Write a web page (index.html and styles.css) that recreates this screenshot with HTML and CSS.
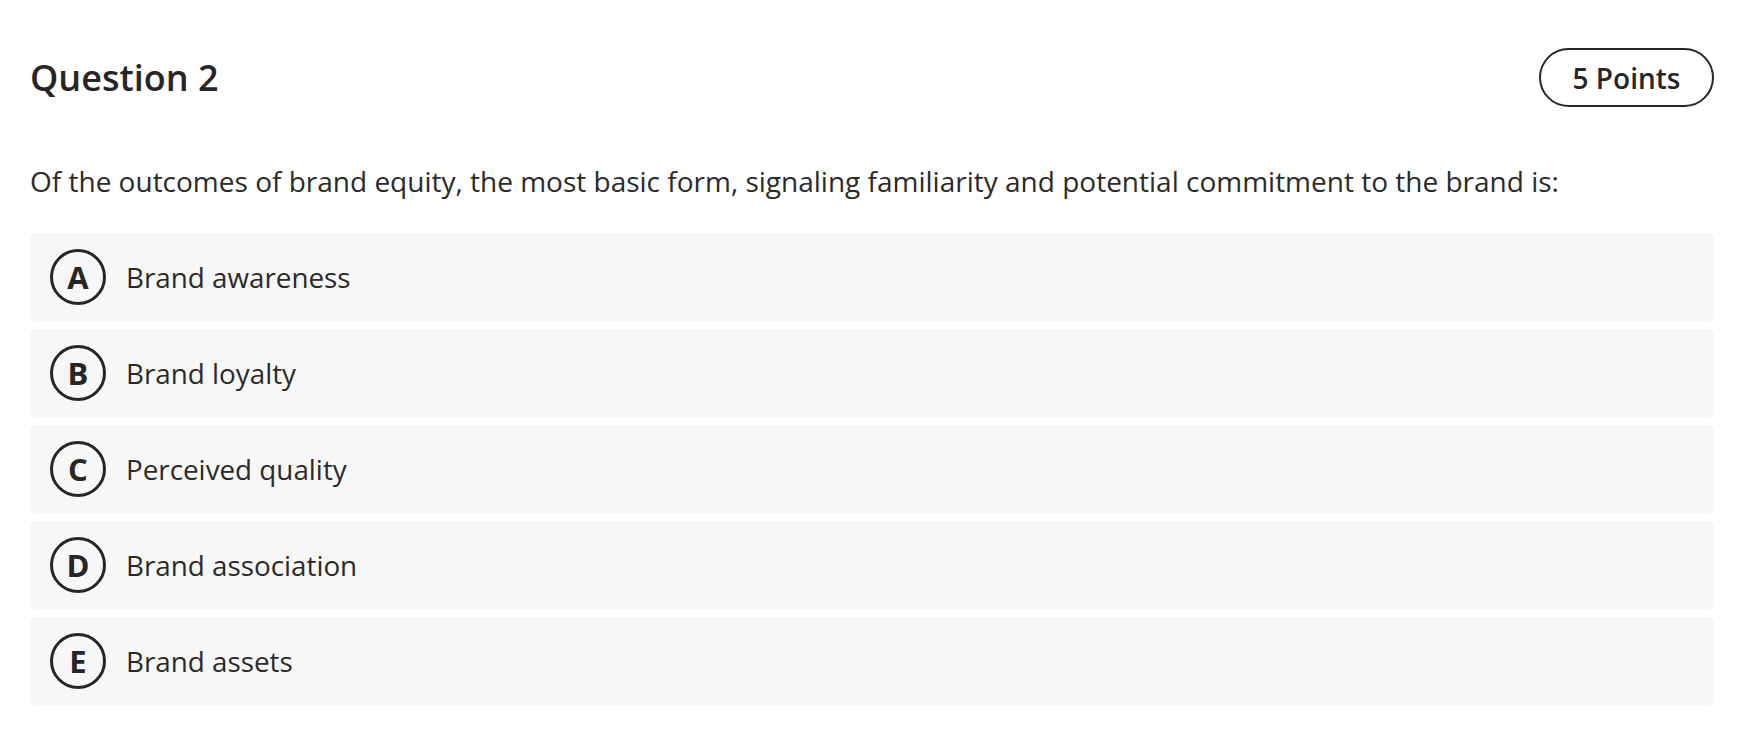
FILE: index.html
```html
<!DOCTYPE html>
<html lang="en">
<head>
<meta charset="utf-8">
<title>Question 2</title>
<link rel="stylesheet" href="styles.css">
</head>
<body>
<main class="question">
  <header class="question-header">
    <h2 class="question-title">Question 2</h2>
    <span class="points">5 Points</span>
  </header>
  <p class="question-text">Of the outcomes of brand equity, the most basic form, signaling familiarity and potential commitment to the brand is:</p>
  <ul class="options">
    <li class="option"><span class="option-letter">A</span><span class="option-label">Brand awareness</span></li>
    <li class="option"><span class="option-letter">B</span><span class="option-label">Brand loyalty</span></li>
    <li class="option"><span class="option-letter">C</span><span class="option-label">Perceived quality</span></li>
    <li class="option"><span class="option-letter">D</span><span class="option-label">Brand association</span></li>
    <li class="option"><span class="option-letter">E</span><span class="option-label">Brand assets</span></li>
  </ul>
</main>
</body>
</html>
```

FILE: styles.css
```css
* { box-sizing: border-box; }

html, body {
  margin: 0;
  padding: 0;
  background: #ffffff;
}

body {
  font-family: "Open Sans", "Noto Sans", "Liberation Sans", sans-serif;
  color: #262626;
}

.question {
  padding: 48px 50px 0 30px;
}

.question-header {
  display: flex;
  align-items: center;
  justify-content: space-between;
  height: 59px;
}

.question-title {
  margin: 0;
  font-size: 36px;
  font-weight: 600;
  line-height: 1;
  color: #262626;
}

.points {
  display: flex;
  align-items: center;
  justify-content: center;
  width: 175px;
  height: 59px;
  border: 2px solid #262626;
  border-radius: 30px;
  font-size: 28px;
  font-weight: 600;
  color: #262626;
}

.question-text {
  margin: 54px 0 32px 0;
  font-size: 28px;
  line-height: 40px;
  color: #2a2a2a;
}

.options {
  list-style: none;
  margin: 0;
  padding: 0;
  display: flex;
  flex-direction: column;
  gap: 8px;
}

.option {
  display: flex;
  align-items: center;
  gap: 20px;
  height: 88px;
  padding: 0 20px;
  background: #f7f7f7;
  border-radius: 5px;
}

.option-letter {
  display: flex;
  align-items: center;
  justify-content: center;
  width: 56px;
  height: 56px;
  border: 3.5px solid #262626;
  border-radius: 50%;
  font-size: 31px;
  font-weight: 700;
  line-height: 1;
  color: #262626;
  flex-shrink: 0;
}

.option-label {
  font-size: 27.8px;
  line-height: 40px;
  color: #2a2a2a;
}
```
